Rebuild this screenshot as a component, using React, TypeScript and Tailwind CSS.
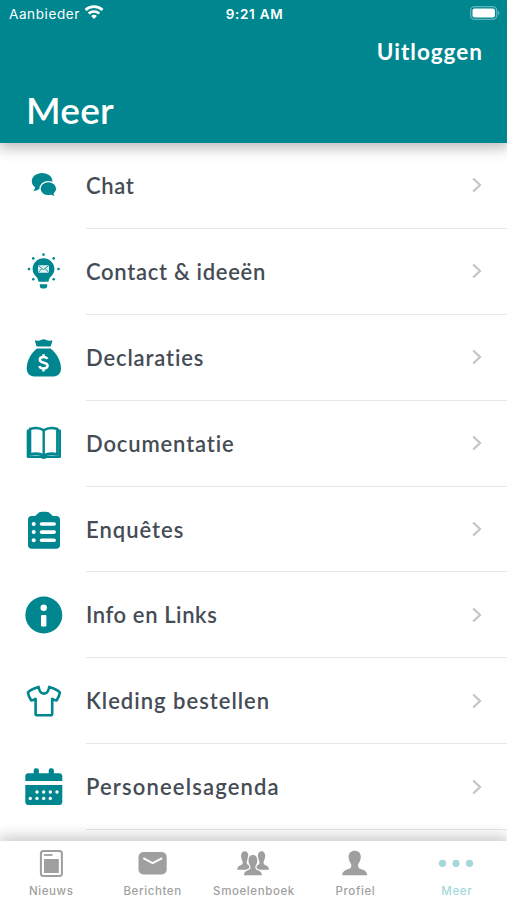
import React from 'react';

const TEAL = '#00868f';

const ChatIcon = () => (
  <svg viewBox="0 0 40 40" className="h-10 w-10">
    <path fill={TEAL} d="M18.1 7c5.8 0 10.3 3.6 10.3 8.2s-4.5 8.3-10.3 8.3c-1 0-2-.1-2.9-.4-1.7 1.2-3.7 2-6 2 1-1 1.7-2.3 1.9-3.8-2-1.5-3.3-3.7-3.3-6.1C7.8 10.6 12.4 7 18.1 7z" />
    <path fill={TEAL} stroke="#fff" strokeWidth="1.3" d="M24.3 15.7c4.8 0 8.4 3.1 8.4 7 0 2-1 3.800-2.500 5 .2 1.300 1 2.400 1.900 3.300-1.900 0-3.700-.7-5-1.600-.9.200-1.800.300-2.800.300-4.700 0-8.300-3.100-8.300-7s3.600-7 8.300-7z" />
  </svg>
);

const IdeaIcon = () => (
  <svg viewBox="0 0 40 40" className="h-10 w-10" fill={TEAL}>
    <path d="M19.500 6.200c6 0 10.900 4.800 10.900 10.700 0 4-2.200 6.200-4.400 8.600-.8 1-1.300 2.900-1.500 4.300h-10c-.2-1.400-.7-3.300-1.500-4.300-2.200-2.400-4.400-4.600-4.400-8.600 0-5.900 4.900-10.700 10.900-10.700z" />
    <path d="M15.800 32.300h7.400v1.600c0 1.500-1.100 2.500-2.500 2.500h-2.400c-1.400 0-2.500-1-2.500-2.500z" />
    <rect x="14" y="13.200" width="11" height="7.600" rx=".8" fill="#e3f2f3" />
    <path d="M14.300 13.600l5.200 4 5.200-4M14.300 20.500l3.500-4M24.700 20.500l-3.500-4" fill="none" stroke={TEAL} strokeWidth=".9" />
    <circle cx="19.500" cy="2.600" r="1.300" />
    <circle cx="9.300" cy="6.400" r="1.300" />
    <circle cx="29.700" cy="6.400" r="1.300" />
    <circle cx="5" cy="17" r="1.300" />
    <circle cx="34.500" cy="17" r="1.300" />
    <circle cx="9.300" cy="27.300" r="1.300" />
    <circle cx="29.700" cy="27.300" r="1.300" />
  </svg>
);

const MoneyIcon = () => (
  <svg viewBox="0 0 40 40" className="h-10 w-10" fill={TEAL}>
    <path d="M12 2.400c2.300.8 3.700.4 5-.4 1.700-.9 3.600-.9 5.200 0 1.500.8 3 1.100 5 .4.700-.2 1.200.3 1 1l-1.300 4.600c-.1.300-.4.500-.8.500H13.200c-.4 0-.7-.2-.8-.5L11.100 3.400c-.2-.7.2-1.200.9-1z" />
    <path d="M13 10.400h13.500C32 14.200 37 22.700 37 30.200c0 5-3.200 8.200-7.500 8.200H10.200c-4.300 0-7.500-3.200-7.500-8.200C2.700 22.700 7.500 14.200 13 10.400z" />
    <path
      d="M23.300 20.900c-.6-1.200-1.900-2-3.800-2-2.200 0-3.700 1.100-3.700 2.800 0 4.100 7.800 1.900 7.800 5.900 0 1.800-1.600 2.900-4 2.900-2.100 0-3.700-.9-4.300-2.400M19.500 16.300v2.600M19.500 30.500v2.900"
      fill="none"
      stroke="#fff"
      strokeWidth="2.500"
    />
  </svg>
);

const BookIcon = () => (
  <svg viewBox="0 0 40 40" className="h-10 w-10" fill="none" stroke={TEAL} strokeLinejoin="round">
    <path strokeWidth="2.600" d="M19.700 6.300C16 3.700 10.200 3.700 6 5.100v25.400c4.600-1.200 9.700-1.200 13.700 1.200 4-2.400 9.100-2.400 13.700-1.200V5.100c-4.200-1.400-10-1.400-13.700 1.200z" />
    <path strokeWidth="2.400" d="M19.700 6.500v26" />
    <path strokeWidth="2.600" d="M5.500 6.900H4v25.800h13.400c.7 1.400 3.900 1.400 4.600 0h13.700V6.900h-1.700" />
  </svg>
);

const SurveyIcon = () => (
  <svg viewBox="0 0 40 40" className="h-10 w-10" fill={TEAL}>
    <path d="M11.500 6c.3-1.100 1-1.800 2.100-2 .9-1.600 2.300-2.300 4.300-2.300h4.200c2 0 3.400.7 4.300 2.300 1.100.2 1.800.9 2.100 2h4C34.500 6 36 7.500 36 9.500v25.700c0 2-1.500 3.500-3.500 3.500h-25c-2 0-3.500-1.500-3.500-3.500V9.500C4 7.500 5.500 6 7.500 6z" />
    <g stroke="#fff" strokeWidth="3.600" strokeLinecap="round">
      <path d="M17.500 14h12.700M17.500 22.100h12.700M17.500 30.200h12.700" />
    </g>
    <g fill="#fff">
      <circle cx="9.700" cy="14" r="2" />
      <circle cx="9.700" cy="22.100" r="2" />
      <circle cx="9.700" cy="30.200" r="2" />
    </g>
  </svg>
);

const InfoIcon = () => (
  <svg viewBox="0 0 40 40" className="h-10 w-10">
    <circle cx="19.800" cy="20" r="18.500" fill={TEAL} />
    <circle cx="19.700" cy="12.800" r="3.200" fill="#fff" />
    <rect x="17" y="20" width="5.400" height="11.600" rx="1" fill="#fff" />
  </svg>
);

const ShirtIcon = () => (
  <svg viewBox="0 0 40 40" className="h-10 w-10" fill="none" stroke={TEAL} strokeWidth="2.600" strokeLinejoin="round">
    <path d="M14.600 5.900C10.500 7.100 6.300 8.400 3.900 11.500c.5 3 1.700 5.600 3.400 8 1.300-.2 2.800-.8 4.300-1.700v14.900c0 .9.600 1.500 1.500 1.500h13.600c.9 0 1.500-.6 1.500-1.500V17.800c1.500.9 3 1.500 4.300 1.700 1.700-2.400 2.900-5 3.400-8-2.400-3.100-6.600-4.400-10.700-5.600-.6 4.300-2.200 6.700-5.300 6.700s-4.700-2.400-5.300-6.700z" />
  </svg>
);

const CalendarIcon = () => (
  <svg viewBox="0 0 40 40" className="h-10 w-10" fill={TEAL}>
    <rect x="9.700" y="1.300" width="5.200" height="8" rx="2.200" />
    <rect x="24.700" y="1.300" width="5.200" height="8" rx="2.200" />
    <path d="M1.300 14V9.300c0-1.700 1.300-3 3-3h31c1.700 0 3 1.300 3 3V14z" />
    <path d="M1.300 18h37v17c0 1.700-1.300 3-3 3h-31c-1.700 0-3-1.300-3-3z" />
    <g fill="#fff">
      <circle cx="13" cy="25" r="1.700" />
      <circle cx="19.700" cy="25" r="1.700" />
      <circle cx="26.300" cy="25" r="1.700" />
      <circle cx="33" cy="25" r="1.700" />
      <circle cx="6.300" cy="31.400" r="1.700" />
      <circle cx="13" cy="31.400" r="1.700" />
      <circle cx="19.700" cy="31.400" r="1.700" />
      <circle cx="26.300" cy="31.400" r="1.700" />
    </g>
  </svg>
);

const person =
  'M15.700 3.700c3.700 0 6.100 2.300 6.100 6 0 2.500-.8 4.800-1.900 6.400-.7 1-.8 1.500-.8 2.600 0 1.900 1 2.700 3.500 3.600 3.500 1.200 5.400 2.500 5.500 6H3.300c.1-3.500 2-4.800 5.500-6 2.500-.9 3.500-1.700 3.500-3.600 0-1.100-.1-1.600-.8-2.600-1.100-1.600-1.900-3.900-1.900-6.400 0-3.700 2.400-6 6.100-6z';

const NewsTab = () => (
  <svg viewBox="0 0 32 32" className="h-8 w-8">
    <rect x="5.900" y="4.100" width="21" height="25" rx="2.500" fill="none" stroke="currentColor" strokeWidth="2" />
    <rect x="9" y="12" width="14.800" height="14" fill="currentColor" />
    <path d="M9 8h8.500" stroke="currentColor" strokeWidth="1.800" />
  </svg>
);

const MailTab = () => (
  <svg viewBox="0 0 32 32" className="h-8 w-8">
    <rect x="2.500" y="5" width="28.200" height="22.400" rx="5" fill="currentColor" />
    <path d="M7.300 11.200l9.300 4.900 9.600-4.900" fill="none" stroke="#fff" strokeWidth="2" />
  </svg>
);

const PeopleTab = () => (
  <svg viewBox="0 0 32 32" className="h-8 w-8" fill="currentColor">
    <path transform="translate(-1.700 1.500) scale(.6 .75)" d={person} />
    <path transform="translate(15.100 1.500) scale(.6 .75)" d={person} />
    <path transform="translate(4.600 5) scale(.72 .82)" stroke="#fff" strokeWidth="3" paintOrder="stroke" d={person} />
  </svg>
);

const ProfileTab = () => (
  <svg viewBox="0 0 32 32" className="h-8 w-8" fill="currentColor">
    <path d={person} />
  </svg>
);

const MoreTab = () => (
  <svg viewBox="0 0 36 32" className="h-8 w-9" fill="currentColor">
    <circle cx="4.500" cy="16.300" r="3.600" />
    <circle cx="18" cy="16.300" r="3.600" />
    <circle cx="31.500" cy="16.300" r="3.600" />
  </svg>
);

const items = [
  { label: 'Chat', Icon: ChatIcon, spacing: 'tracking-[0.600px]' },
  { label: 'Contact & ideeën', Icon: IdeaIcon, spacing: 'tracking-[0.700px]' },
  { label: 'Declaraties', Icon: MoneyIcon, spacing: 'tracking-[0.850px]' },
  { label: 'Documentatie', Icon: BookIcon, spacing: 'tracking-[0.850px]' },
  { label: 'Enquêtes', Icon: SurveyIcon, spacing: 'tracking-[1px]' },
  { label: 'Info en Links', Icon: InfoIcon, spacing: 'tracking-[0.600px]' },
  { label: 'Kleding bestellen', Icon: ShirtIcon, spacing: 'tracking-[1px]' },
  { label: 'Personeelsagenda', Icon: CalendarIcon, spacing: 'tracking-[1.150px]' },
];

const tabs = [
  { label: 'Nieuws', Icon: NewsTab },
  { label: 'Berichten', Icon: MailTab },
  { label: 'Smoelenboek', Icon: PeopleTab },
  { label: 'Profiel', Icon: ProfileTab },
  { label: 'Meer', Icon: MoreTab, active: true },
];

const StatusBar = () => (
  <div className="grid h-7 grid-cols-3 items-center pl-[9px] pr-[7px] font-['Inter',sans-serif] text-[13.500px] text-white">
    <div className="flex items-center gap-1">
      <span className="tracking-[0.600px]">Aanbieder</span>
      <svg viewBox="0 0 20 16" className="-mt-1 h-4 w-5" fill="none" stroke="currentColor" strokeWidth="2.700">
        <path d="M1.500 6c4.700-4.400 12.300-4.400 17 0" />
        <path d="M4.700 9.500c3-2.700 7.600-2.700 10.600 0" />
        <path d="M10 15l-2.900-3.100c1.600-1.400 4.200-1.400 5.800 0z" fill="currentColor" stroke="none" />
      </svg>
    </div>
    <span className="text-center font-semibold tracking-[0.700px] whitespace-pre">9:21 AM</span>
    <svg viewBox="0 0 30 14" className="-mt-0.5 h-[14px] w-[30px] justify-self-end">
      <rect x=".7" y=".7" width="26" height="12.600" rx="3.800" fill="none" stroke="#5fb3b9" strokeWidth="1.300" />
      <rect x="2.500" y="2.500" width="22.400" height="9" rx="2" fill="#fff" />
      <path d="M28 4.800c2 .8 2 3.600 0 4.400z" fill="#5fb3b9" />
    </svg>
  </div>
);

const App = () => {
  return (
    <div className="flex h-[900px] w-[507px] flex-col overflow-hidden bg-white font-['Lato',sans-serif]">
      <header className="z-10 h-[143px] shrink-0 bg-[#00868f] text-white shadow-[0_2px_14px_2px_rgba(0,0,0,0.300)]">
        <StatusBar />
        <div className="flex h-12 items-center justify-end pr-[24px] text-[22.500px] font-bold tracking-[1px]">Uitloggen</div>
        <h1 className="pl-[26px] text-[37px] leading-[68px] font-semibold tracking-[0.200px]">Meer</h1>
      </header>

      <main className="min-h-0 flex-1 overflow-hidden">
        {items.map(({ label, Icon, spacing }) => (
          <div key={label} className="flex h-[85.900px] items-center pl-6">
            <Icon />
            <div className="ml-[22px] flex h-full flex-1 items-center justify-between border-b border-[#e6e7e8] pr-[25px]">
              <span className={`text-[22px] font-semibold text-[#454c55] ${spacing}`}>{label}</span>
              <svg viewBox="0 0 10 16" className="h-4 w-[10px]" fill="none" stroke="#c4c5c7" strokeWidth="2.200">
                <path d="M1.200 1.500L8 8l-6.800 6.500" />
              </svg>
            </div>
          </div>
        ))}
      </main>

      <nav className="z-10 grid h-[59px] shrink-0 grid-cols-5 bg-white shadow-[0_-2px_14px_2px_rgba(0,0,0,0.220)]">
        {tabs.map(({ label, Icon, active }) => (
          <div key={label} className={`flex flex-col items-center pt-1.5 ${active ? 'text-[#a5d8da]' : 'text-[#9f9f9f]'}`}>
            <Icon />
            <span className="mt-[3px] pl-px font-['Inter',sans-serif] text-[11.500px] leading-[18px] font-medium tracking-[0.600px]">{label}</span>
          </div>
        ))}
      </nav>
    </div>
  );
};

export default App;
